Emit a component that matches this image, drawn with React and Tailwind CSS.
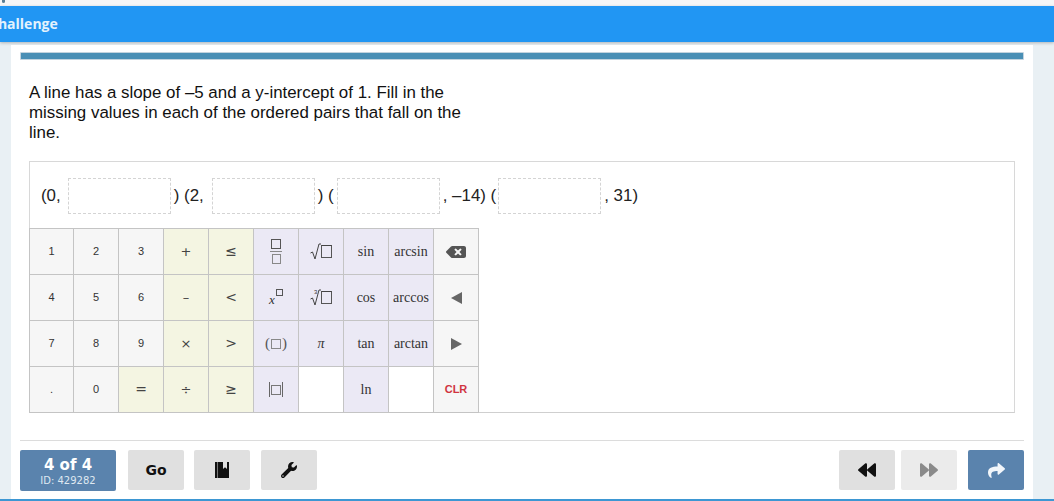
import React from "react";
import { FaBackspace, FaWrench, FaBackward, FaForward, FaShare } from "react-icons/fa";

const Box = ({ c = "w-[10px] h-[10px]" }) => <span className={`inline-block border border-[#555] ${c}`} />;
const Num = ({ t, bg = "bg-[#f6f6f6]", c = "" }) => (
  <div className={`flex items-center justify-center border-r border-b border-[#c4c4c4] ${bg} text-[#333] ${c}`}>{t}</div>
);
const sans = "font-['Liberation_Sans',sans-serif] text-[11px]";
const ser = "font-['Liberation_Serif',serif] text-[14px]";
const op = "font-['DejaVu_Sans',sans-serif] text-[13px] text-[#444]";
const opBig = "font-['DejaVu_Sans',sans-serif] text-[14px] text-[#444]";
const Y = "bg-[#f4f5e2]";
const P = "bg-[#ebe9f5]";
const W = "bg-white";

const Sqrt = ({ idx }) => (
  <span className="relative inline-flex items-end">
    {idx && <span className="absolute left-[4px] top-[0px] text-[6px] leading-none">3</span>}
    <svg width="11" height="17" viewBox="0 0 11 17" fill="none" stroke="#444" strokeWidth="1"><path d="M0.5 10 L2.5 9 L5 16 L9 1 H11" /></svg>
    <span className="inline-block w-[11px] h-[13px] border border-[#555] border-t-[#444] mb-[2px]" />
  </span>
);

const cells = [
  <Num t="1" c={sans} />, <Num t="2" c={sans} />, <Num t="3" c={sans} />,
  <Num t="+" bg={Y} c={op} />, <Num t="≤" bg={Y} c={opBig} />,
  <Num bg={P} t={<span className="flex flex-col items-center gap-[2px]"><Box /><span className="w-[12px] border-t border-[#888]" /><Box c="w-[9px] h-[10px] border-[#888]" /></span>} />,
  <Num bg={P} t={<Sqrt />} />, <Num t="sin" bg={P} c={ser} />, <Num t="arcsin" bg={P} c={ser} />,
  <Num t={<FaBackspace size={20} color="#555" />} />,

  <Num t="4" c={sans} />, <Num t="5" c={sans} />, <Num t="6" c={sans} />,
  <Num t="–" bg={Y} c={op} />, <Num t="<" bg={Y} c={opBig} />,
  <Num bg={P} t={<span className="flex items-start"><i className="font-['Liberation_Serif',serif] text-[13px] leading-none mt-[4px]">x</i><Box c="w-[7px] h-[7px] ml-[1px]" /></span>} />,
  <Num bg={P} t={<Sqrt idx />} />, <Num t="cos" bg={P} c={ser} />, <Num t="arccos" bg={P} c={ser} />,
  <Num t={<svg width="11" height="12" viewBox="0 0 11 12"><path d="M11 0V12L0 6Z" fill="#666" /></svg>} />,

  <Num t="7" c={sans} />, <Num t="8" c={sans} />, <Num t="9" c={sans} />,
  <Num t="×" bg={Y} c={op} />, <Num t=">" bg={Y} c={opBig} />,
  <Num bg={P} t={<span className="flex items-center text-[15px] font-['Liberation_Serif',serif] text-[#555]">(<Box c="w-[10px] h-[10px] border-[#888] mx-[1px]" />)</span>} />,
  <Num t="π" bg={P} c={`${ser} italic`} />, <Num t="tan" bg={P} c={ser} />, <Num t="arctan" bg={P} c={ser} />,
  <Num t={<svg width="11" height="12" viewBox="0 0 11 12"><path d="M0 0V12L11 6Z" fill="#666" /></svg>} />,

  <Num t="." c={sans} />, <Num t="0" c={sans} />, <Num t="=" bg={Y} c={opBig} />,
  <Num t="÷" bg={Y} c={op} />, <Num t="≥" bg={Y} c={opBig} />,
  <Num bg={P} t={<span className="flex items-center gap-[1px]"><span className="w-px h-[15px] bg-[#666]" /><Box c="w-[10px] h-[10px] border-[#777]" /><span className="w-px h-[15px] bg-[#666]" /></span>} />,
  <Num bg={W} t="" />, <Num t="ln" bg={P} c={ser} />, <Num bg={W} t="" />,
  <Num t={<span className="text-[#d0343f]">CLR</span>} c="font-['Liberation_Sans',sans-serif] text-[11px] font-bold" />,
];

const Inp = () => <span className="inline-block w-[103px] h-[36px] border border-dashed border-[#d4d4d4] shrink-0" />;
const Btn = ({ children, c = "bg-[#e0e0e0]", w = "w-[56px]" }) => (
  <div className={`${w} h-[40px] rounded-[2px] flex items-center justify-center ${c}`}>{children}</div>
);

export default function App() {
  return (
    <div className="w-[1054px] h-[501px] overflow-hidden flex flex-col bg-[#e9f0f4] font-['Liberation_Sans',sans-serif] relative">
      <div className="h-[6px] bg-[#f5f6f7] shrink-0 flex">
        <span className="ml-[2px] w-[3px] h-[3px] rounded-b-full bg-[#5b7f95]" />
      </div>
      <div className="h-[36px] bg-[#2196f3] shrink-0 flex items-center shadow-[0_1px_3px_rgba(0,0,0,0.25)]">
        <span className="font-['Open_Sans',sans-serif] font-bold text-[14px] leading-[34px] mb-[1px] text-[#e3f2fd] -ml-[11px]">Challenge</span>
      </div>
      <div className="flex-1 min-h-0 mt-[3px] ml-[11px] mr-[21px] bg-white px-[9px] pt-[7px] flex flex-col">
        <div className="h-[8px] shrink-0 border border-[#c3d3de] bg-[#4a8fb5] rounded-[1px]" />
        <div className="ml-[9px] mt-[23px] w-[440px] text-[16.9px] leading-[20px] text-[#111] shrink-0">
          A line has a slope of –5 and a y-intercept of 1. Fill in the missing values in each of the ordered pairs that fall on the line.
        </div>
        <div className="mt-[18px] ml-[9px] w-[986px] h-[252px] border border-[#d8d8d8] border-b-[#cfcfcf] shrink-0">
          <div className="h-[66px] flex items-center pl-[11px] text-[16.9px] text-[#222] pt-[1px]">
            <span>(0,</span><span className="w-[7px]" /><Inp /><span className="w-[3px]" /><span>) (2,</span><span className="w-[8px]" /><Inp /><span className="w-[3px]" /><span>) (</span><span className="w-[3px]" /><Inp /><span className="w-[3px]" /><span>, –14) (</span><span className="w-[2px]" /><Inp /><span className="w-[3px]" /><span>, 31)</span>
          </div>
          <div className="grid grid-cols-[44px_repeat(9,45px)] grid-rows-[repeat(4,46px)] w-[450px] border-t border-l border-[#c4c4c4] -ml-px">
            {cells.map((x, i) => <React.Fragment key={i}>{x}</React.Fragment>)}
          </div>
        </div>
        <div className="mt-[27px] border-t border-[#dcdcdc] pt-[9px] flex items-start shrink-0">
          <div className="w-[96px] h-[41px] pt-[4px] rounded-[2px] bg-[#5a83ad] text-white flex flex-col items-center justify-center font-['DejaVu_Sans',sans-serif]">
            <span className="text-[15px] font-bold leading-[17px]">4 of 4</span>
            <span className="text-[10px] leading-[14px] text-[#dfe8f1]">ID: 429282</span>
          </div>
          <div className="w-[12px]" />
          <Btn><span className="font-['DejaVu_Sans',sans-serif] font-bold text-[14px] text-[#111]">Go</span></Btn>
          <div className="w-[10px]" />
          <Btn>
            <svg width="14" height="16" viewBox="0 0 14 16"><path d="M0 0H14V16H0Z" fill="#111" /><path d="M2 0H3V16H2Z" fill="#777" /><path d="M8 0H12V7L10 5.2L8 7Z" fill="#e0e0e0" /></svg>
          </Btn>
          <div className="w-[11px]" />
          <Btn><FaWrench size={16} color="#111" /></Btn>
          <div className="flex-1" />
          <Btn><FaBackward size={18} color="#111" /></Btn>
          <div className="w-[6px]" />
          <Btn c="bg-[#ebebeb]"><FaForward size={18} color="#8a8a8a" /></Btn>
          <div className="w-[11px]" />
          <Btn c="bg-[#5a83ad]"><FaShare size={17} color="#f2f6fa" /></Btn>
        </div>
      </div>
      <div className="h-[2px] bg-[#3d97d3] shrink-0" />
    </div>
  );
}
